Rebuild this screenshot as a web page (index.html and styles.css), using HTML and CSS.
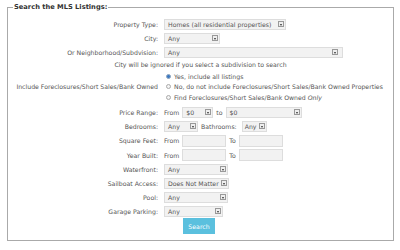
FILE: index.html
```html
<!DOCTYPE html>
<html lang="en">
<head>
    <meta charset="UTF-8" />
    <link rel="stylesheet" href="styles.css">
</head>
<body>
    <div class="page">
        <fieldset class="search">
            <legend>Search the MLS Listings:</legend>
            <div class="rows">
                <div class="row">
                    <label>Property Type:</label>
                    <div class="field"><span class="select w-type">Homes (all residential properties)<i class="arrow"></i></span></div>
                </div>
                <div class="row">
                    <label>City:</label>
                    <div class="field"><span class="select w-city">Any<i class="arrow"></i></span></div>
                </div>
                <div class="row">
                    <label>Or Neighborhood/Subdvision:</label>
                    <div class="field"><span class="select w-hood">Any<i class="arrow"></i></span></div>
                </div>
                <p class="note">City will be ignored if you select a subdivision to search</p>
                <div class="row group">
                    <label>Include Foreclosures/Short Sales/Bank Owned</label>
                    <div class="field radios">
                        <div class="radio-line"><span class="radio on"></span>Yes, include all listings</div>
                        <div class="radio-line"><span class="radio"></span>No, do not include Foreclosures/Short Sales/Bank Owned Properties</div>
                        <div class="radio-line"><span class="radio"></span>Find Foreclosures/Short Sales/Bank Owned&nbsp;<em>Only</em></div>
                    </div>
                </div>
                <div class="row price">
                    <label>Price Range:</label>
                    <div class="field">
                        <span class="word">From</span>
                        <span class="select w-from">$0<i class="arrow"></i></span>
                        <span class="word">to</span>
                        <span class="select w-to">$0<i class="arrow"></i></span>
                    </div>
                </div>
                <div class="row">
                    <label>Bedrooms:</label>
                    <div class="field">
                        <span class="select w-bed">Any<i class="arrow"></i></span>
                        <span class="word inline-label">Bathrooms:</span>
                        <span class="select w-bath">Any<i class="arrow"></i></span>
                    </div>
                </div>
                <div class="row tall">
                    <label>Square Feet:</label>
                    <div class="field">
                        <span class="word">From</span><span class="text-input"></span>
                        <span class="word">To</span><span class="text-input"></span>
                    </div>
                </div>
                <div class="row">
                    <label>Year Built:</label>
                    <div class="field">
                        <span class="word">From</span><span class="text-input"></span>
                        <span class="word">To</span><span class="text-input"></span>
                    </div>
                </div>
                <div class="row">
                    <label>Waterfront:</label>
                    <div class="field"><span class="select w-water">Any<i class="arrow"></i></span></div>
                </div>
                <div class="row">
                    <label>Sailboat Access:</label>
                    <div class="field"><span class="select w-sail">Does Not Matter<i class="arrow"></i></span></div>
                </div>
                <div class="row">
                    <label>Pool:</label>
                    <div class="field"><span class="select w-water">Any<i class="arrow"></i></span></div>
                </div>
                <div class="row">
                    <label>Garage Parking:</label>
                    <div class="field"><span class="select w-garage">Any<i class="arrow"></i></span></div>
                </div>
                <div class="actions">
                    <button class="btn">Search</button>
                </div>
            </div>
        </fieldset>
    </div>
</body>
</html>
```

FILE: styles.css
```css
html,
body {
    padding: 0;
    margin: 0;
    background: #fff;
}
body {
    font-family: "DejaVu Sans", Verdana, sans-serif;
    font-size: 6.2px;
    color: #555;
}
.page {
    padding: 2px 7px 0 7px;
}
.search {
    width: 387px;
    box-sizing: border-box;
    margin: 0;
    padding: 0 0 6px 0;
    border: 1px solid #aaa;
}
.search legend {
    margin-left: 5px;
    padding: 0 1px;
    line-height: 10px;
    font-size: 6.7px;
    font-weight: bold;
    color: #333;
}
.rows {
    padding-top: 5px;
}
.row {
    display: grid;
    grid-template-columns: 150px auto;
    column-gap: 6px;
    align-items: center;
    height: 14px;
}
.row.tall {
    height: 15px;
}
.row label {
    text-align: right;
    white-space: nowrap;
}
.field {
    display: flex;
    align-items: center;
    white-space: nowrap;
}
.select {
    display: inline-flex;
    flex: none;
    align-items: center;
    justify-content: space-between;
    column-gap: 2px;
    box-sizing: border-box;
    height: 11px;
    padding: 0 1px 0 3px;
    background: #f2f2f2;
    border: 1px solid #ddd;
}
.arrow {
    position: relative;
    flex: none;
    width: 6px;
    height: 6px;
    box-sizing: border-box;
    border: 1px solid #999;
    background: #eee;
}
.arrow::after {
    content: "";
    position: absolute;
    left: 1px;
    top: 1.5px;
    border-top: 2px solid #333;
    border-left: 1px solid transparent;
    border-right: 1px solid transparent;
}
.w-type { width: 122px; }
.w-city { width: 56px; }
.w-hood { width: 179px; padding-right: 4px; }
.w-from { width: 31px; }
.w-to { width: 76px; }
.w-bed { width: 34px; }
.w-bath { width: 25px; padding-left: 2px; }
.w-water { width: 64px; }
.w-sail { width: 65px; }
.w-garage { width: 59px; }
.word {
    margin-right: 3px;
}
.select + .word {
    margin-left: 3px;
}
.inline-label {
    margin-left: 3px;
    margin-right: 5px;
}
.text-input {
    display: inline-block;
    width: 44px;
    height: 12px;
    box-sizing: border-box;
    background: #f2f2f2;
    border: 1px solid #ddd;
}
.text-input + .word {
    margin-left: 3px;
}
.note {
    margin: 0;
    height: 12px;
    line-height: 12px;
    text-align: center;
}
.row.group {
    height: auto;
    margin-bottom: 2.5px;
}
.radios {
    flex-direction: column;
    align-items: flex-start;
}
.radio-line {
    display: flex;
    align-items: center;
    height: 10.5px;
}
.radio {
    width: 5px;
    height: 5px;
    box-sizing: border-box;
    margin: 0 3px 0 2px;
    border: 1px solid #aaa;
    border-radius: 50%;
    background: #f4f4f4;
}
.radio.on {
    border-color: #8fa6bf;
    background: #3b78c2;
}
.actions {
    padding: 0 0 0 175px;
}
.btn {
    width: 32px;
    height: 16px;
    padding: 0;
    border: none;
    background: #5bc0de;
    color: #fff;
    font-family: "DejaVu Sans", Verdana, sans-serif;
    font-size: 6.2px;
}
```
